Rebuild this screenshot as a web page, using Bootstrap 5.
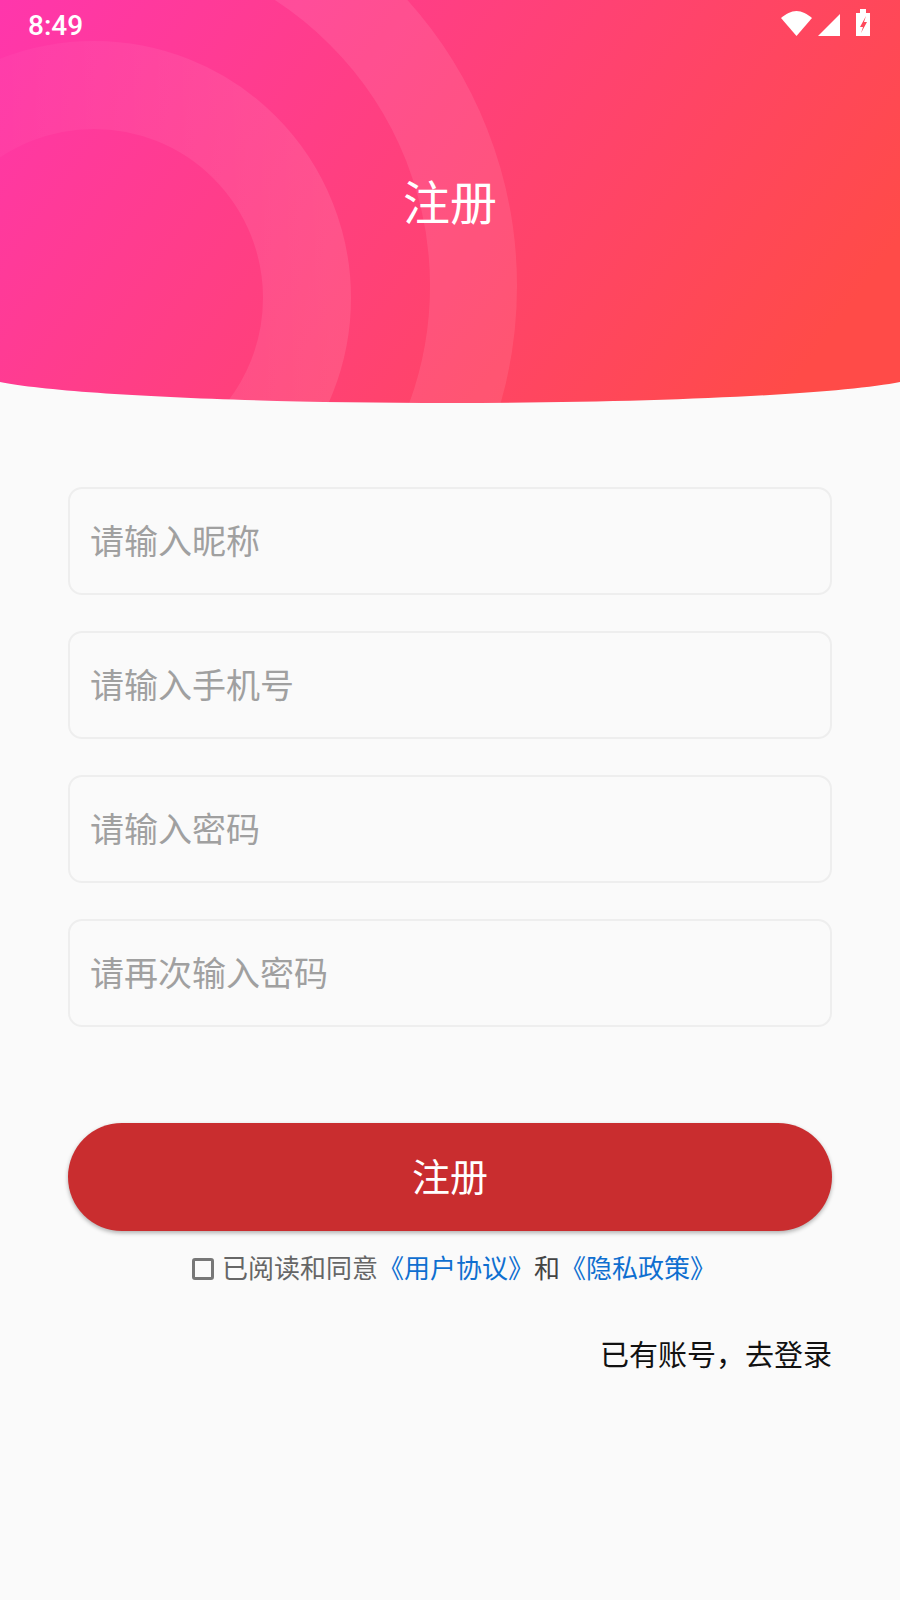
<!DOCTYPE html>
<html lang="zh">
<head>
  <meta charset="UTF-8">
  <title>注册</title>
  <link href="https://cdn.jsdelivr.net/npm/bootstrap@5.3.0/dist/css/bootstrap.min.css" rel="stylesheet">
  <style>
    body {
      background: #fafafa;
      font-family: "Roboto", "Noto Sans CJK SC", sans-serif;
      width: 900px;
      height: 1600px;
      overflow: hidden;
    }
    .hero-wrap { position: relative; height: 403px; }
    .hero-clip {
      height: 403px;
      background: linear-gradient(126deg, #ff36ac 0%, #ff4b48 90%);
      clip-path: path("M0 0H900V382C840 394 660 403 450 403C240 403 60 394 0 382Z");
    }
    .hero-rings { position: absolute; left: 0; top: 0; display: block; }
    .status-row { position: relative; height: 50px; padding: 0 29px 0 28px; color: #fff; }
    .status-time { font-size: 28px; font-weight: 500; line-height: 50px; padding-top: 1px; }
    .status-icons { display: block; }
    .hero-title {
      position: relative;
      color: #fff;
      font-size: 47px;
      line-height: 60px;
      margin-top: 124px;
      text-align: center;
    }
    .form-area { padding: 84px 68px 0; }
    .field-input.form-control {
      height: 108px;
      background: #fafafa;
      border: 2px solid #eeeeee;
      border-radius: 14px;
      padding: 2px 20px 0;
      font-size: 34px;
      margin-bottom: 36px;
      box-shadow: none;
    }
    .field-input::placeholder { color: #a0a0a0; opacity: 1; }
    .submit-btn.btn {
      height: 108px;
      margin-top: 60px;
      padding-top: 8px;
      width: 100%;
      background: #c92d2f;
      color: #fff;
      border: 0;
      border-radius: 54px;
      font-size: 38px;
      box-shadow: 0 2px 4px rgba(0, 0, 0, .3);
    }
    .agree-row { margin-top: 19px; padding-left: 8px; height: 38px; font-size: 26px; color: #666; }
    .agree-box {
      width: 22px;
      height: 22px;
      border: 3px solid #777;
      border-radius: 3px;
      margin-right: 8px;
    }
    .agree-row a { color: #0f6fd0; text-decoration: none; }
    .agree-and { color: #444; }
    .login-link { margin-top: 48px; font-size: 29px; line-height: 40px; color: #111; text-align: right; }
  </style>
</head>
<body>

  <!-- Header -->
  <div class="hero-wrap">
    <div class="hero-clip">
      <svg class="hero-rings" width="900" height="403" viewBox="0 0 900 403">
        <defs>
          <linearGradient id="ringFade" gradientUnits="userSpaceOnUse" x1="0" y1="0" x2="330" y2="0">
            <stop offset="0" stop-color="#fff" stop-opacity=".03"/>
            <stop offset="1" stop-color="#fff" stop-opacity=".1"/>
          </linearGradient>
        </defs>
        <circle cx="89" cy="286" r="384.5" fill="none" stroke="#fff" stroke-opacity=".09" stroke-width="87"/>
        <circle cx="94" cy="298" r="213" fill="none" stroke="url(#ringFade)" stroke-width="88"/>
      </svg>
      <div class="status-row d-flex justify-content-between align-items-center">
        <span class="status-time">8:49</span>
        <svg class="status-icons" width="90" height="50" viewBox="781 0 90 50" fill="#fff">
          <path d="M781 18C786 14 791 11 796.5 11C802 11 807 14 812 18L796.5 36Z"/>
          <path d="M818 36L840 14V36Z"/>
          <path fill-rule="evenodd" d="M856 13H860V9H866V13H870V36H856ZM866 16L860 27H863L861 33L867 22H864Z"/>
        </svg>
      </div>
      <div class="hero-title">注册</div>
    </div>
  </div>

  <!-- Form -->
  <div class="form-area">
    <input type="text" class="form-control field-input" placeholder="请输入昵称">
    <input type="text" class="form-control field-input" placeholder="请输入手机号">
    <input type="password" class="form-control field-input" placeholder="请输入密码">
    <input type="password" class="form-control field-input" placeholder="请再次输入密码">
    <button type="button" class="btn submit-btn">注册</button>
    <div class="agree-row d-flex justify-content-center align-items-center">
      <span class="agree-box"></span>
      <span>已阅读和同意<a href="#">《用户协议》</a><span class="agree-and">和</span><a href="#">《隐私政策》</a></span>
    </div>
    <div class="login-link">已有账号，去登录</div>
  </div>

  <script src="https://cdn.jsdelivr.net/npm/bootstrap@5.3.0/dist/js/bootstrap.bundle.min.js"></script>
</body>
</html>
